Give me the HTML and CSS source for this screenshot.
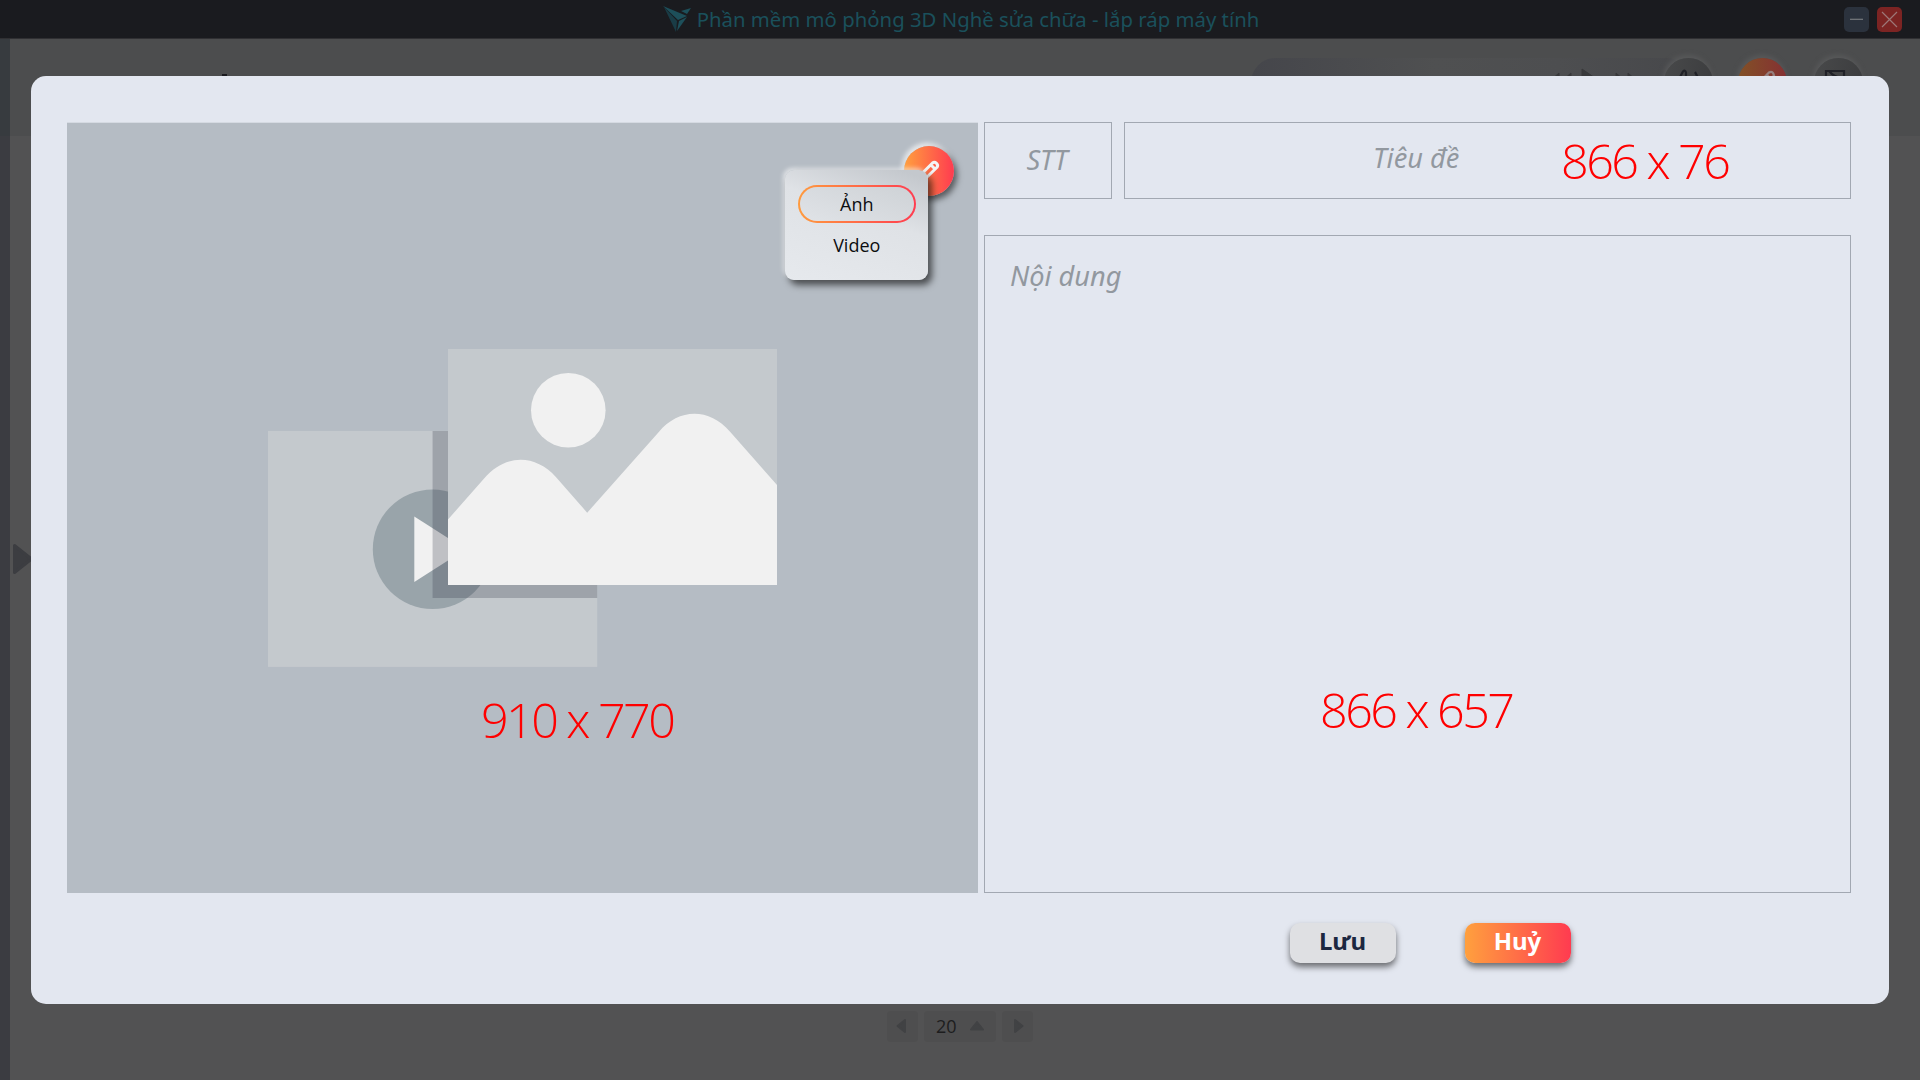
FILE: index.html
```html
<!DOCTYPE html>
<html lang="vi">
<head>
<meta charset="utf-8">
<title>Phần mềm mô phỏng 3D</title>
<link rel="stylesheet" href="styles.css">
</head>
<body>
<div class="app">
  <header class="titlebar">
    <div class="brand">
      <svg class="brand-logo" viewBox="0 0 28 26"><path d="M0 0 24 10 15 14z"/><path d="M18 5 28 2 24 8z"/><path d="M16 15 24 11 14 25z"/><path class="fold" d="M1 1 14 15 13 26z"/></svg>
      <span>Phần mềm mô phỏng 3D Nghề sửa chữa - lắp ráp máy tính</span>
    </div>
    <div class="window-buttons">
      <span class="win-btn"><svg viewBox="0 0 25 25"><path d="M6 12.3h13"/></svg></span>
      <span class="win-btn close"><svg viewBox="0 0 25 25"><path d="M5 5 20 20M20 5 5 20"/></svg></span>
    </div>
  </header>
  <div class="toolbar">
    <span class="heading-mark"></span>
    <div class="player"><svg viewBox="0 0 90 49"><path d="M0 23 9 15v16zM12 23 21 15v16zM32 11 51 24 32 38zM66 15 75 23 66 31zM78 15 87 23 78 31z"/></svg></div>
    <span class="tool volume"><svg viewBox="0 0 49 49"><path d="M11 21h4l4-7.500q2-2 3 1V35l-7-6h-4zM31 14q7 10 0 20"/></svg></span>
    <span class="tool edit"><svg viewBox="0 0 49 49"><path d="M18 28 31 14.500q4-2 5 3L21 33l-6 1zM13 19h4M29 17l4 4"/></svg></span>
    <span class="tool gallery"><svg viewBox="0 0 49 49"><path d="M12 32V13h18v6M15 13q5 6 12 7"/></svg></span>
  </div>
  <div class="workspace"></div>
  <aside class="rail"><i class="rail-top"></i><i class="rail-main"></i></aside>
  <svg class="rail-arrow" viewBox="0 0 20 30"><path d="M1.5 1.5 18.5 15 1.5 28.500z"/></svg>
  <nav class="pager">
    <span class="page-btn"><svg viewBox="0 0 31 31"><path d="M18 9 10.500 15 18 21z"/></svg></span>
    <span class="page-size"><span>20</span> <svg viewBox="0 0 16 12"><path d="M8 2 14 9.500H2z"/></svg></span>
    <span class="page-btn"><svg viewBox="0 0 31 31"><path d="M13 9 20.500 15 13 21z"/></svg></span>
  </nav>

  <section class="modal">
    <div class="editor">
      <div class="media">
        <svg class="media-art" viewBox="267.900 348.800 509.200 318">
          <rect x="267.900" y="430.700" width="329.200" height="236" fill="#c4c9cd"/>
          <circle cx="432.500" cy="549" r="59.800" fill="#99a4aa"/>
          <path d="M414.200 516.200 465.500 549 414.200 581.700z" fill="#f1f1f1"/>
          <path d="M432.500 430.700H597.100V597.800H432.500z" fill="#343844" fill-opacity=".26"/>
          <rect x="447.900" y="348.800" width="329.200" height="236" fill="#c4c9cd"/>
          <circle cx="568.200" cy="410" r="37.300" fill="#f1f1f1"/>
          <path d="M447.900 519.300 483.800 478.500C505 453.500 535 453.500 556 477L587.100 512.500 658.500 432C679 407.500 709 407.500 730 431.500L777.100 485V584.800H447.900z" fill="#f1f1f1"/>
        </svg>
        <span class="size">910 x 770</span>
        <span class="edit-badge"><svg viewBox="0 0 50 50"><path d="M15 30.500 28.500 17q2-1.500 4 .3t.5 4L19 35l-5.500 1z M27 19l4 4"/></svg></span>
        <div class="menu">
          <span class="menu-item active">Ảnh</span>
          <span class="menu-item">Video</span>
        </div>
      </div>
      <div class="fields">
        <div class="field-row">
          <div class="field number">STT</div>
          <div class="field title"><span class="title-label">Tiêu đề</span><span class="size">866 x 76</span></div>
        </div>
        <div class="field content"><span>Nội dung</span><span class="size">866 x 657</span></div>
      </div>
    </div>
    <div class="actions">
      <button class="btn save">Lưu</button>
      <button class="btn cancel">Huỷ</button>
    </div>
  </section>
</div>
</body>
</html>
```
FILE: styles.css
```css
* { box-sizing: border-box; }
body { margin: 0; font-family: "Noto Sans", sans-serif; }
svg { display: block; }
.app { position: relative; width: 1920px; height: 1080px; overflow: hidden; background: #525253; display: flex; flex-direction: column; }

.titlebar { height: 39px; flex: none; background: #1a1b1f; border-bottom: 1px solid #303033; display: grid; grid-template-columns: 1fr auto 1fr; align-items: center; padding: 0 18px 0 20px; }
.brand { grid-column: 2; display: flex; align-items: center; gap: 6px; color: #1a505b; font-size: 20.350px; line-height: 38px; white-space: nowrap; }
.brand-logo { width: 28px; height: 26px; fill: #1d4f5a; }
.brand-logo .fold { fill: #193c46; }
.window-buttons { grid-column: 3; justify-self: end; display: flex; gap: 8px; }
.win-btn { width: 25px; height: 25px; border-radius: 5px; background: #2b323d; }
.win-btn svg { stroke: #777a7e; stroke-width: 1.2; fill: none; }
.win-btn.close { background: #7c2423; }
.win-btn.close svg { stroke: #9c7777; }

.toolbar { height: 97px; flex: none; background: #4c4d4e; display: flex; align-items: flex-start; padding: 19px 57px 0 0; justify-content: flex-end; }
.heading-mark { width: 5px; height: 2px; margin: 16px 1024px 0 0; background: #1b1b20; }
.player { width: 440px; height: 49px; margin-right: -27px; border-radius: 25px; background: linear-gradient(90deg, #45464b, #4f5051 42%, #4d4e50 70%, #47484b); padding-left: 299px; }
.player svg { width: 90px; height: 49px; fill: #38393b; stroke: #38393b; stroke-linejoin: round; }
.tool { width: 49px; height: 49px; border-radius: 50%; background: linear-gradient(100deg, #48494a, #3b3c3e); box-shadow: -1px -3px 5px #58595a; margin-right: 25px; }
.tool svg { fill: none; stroke: #202127; stroke-width: 2.2; }
.tool.edit { background: linear-gradient(90deg, #825126, #853033); margin-right: 27px; }
.tool.edit svg { stroke: #957f7e; }
.tool.gallery { margin-right: 0; }
.workspace { flex: 1; }
.rail { position: absolute; left: 0; top: 39px; width: 10px; height: 1041px; display: flex; flex-direction: column; }
.rail-top { height: 97px; background: #373b3f; }
.rail-main { flex: 1; background: #3b3c41; }
.rail-arrow { position: absolute; left: 13px; top: 544px; width: 20px; height: 30px; fill: #3c3d41; stroke: #3c3d41; stroke-width: 3; stroke-linejoin: round; }

.pager { position: absolute; left: 887px; top: 1011px; display: flex; gap: 6px; }
.page-btn, .page-size { height: 31px; border-radius: 4px; background: #4e4e4f; }
.page-btn { width: 31px; }
.page-size { width: 72px; display: flex; align-items: center; justify-content: space-between; padding: 0 11px 1px 12px; font: 400 18px "Open Sans", sans-serif; color: #1d1d1e; }
.page-size svg { width: 16px; height: 12px; }
.pager svg { fill: #414244; stroke: #414244; stroke-width: 2; stroke-linejoin: round; }

.modal { position: absolute; left: 31px; top: 76px; width: 1858px; height: 928px; border-radius: 15px; background: #e3e7f0; padding: 46px 37px 0 36px; }
.editor { display: flex; gap: 6px; height: 771px; }
.media { position: relative; width: 911px; height: 771px; background: #b5bcc4; border-top: 1px solid #d5dae2; padding: 225.800px 0 0 200.900px; }
.media-art { width: 509.200px; height: 318px; }
.size { font-family: "Open Sans", sans-serif; font-weight: 300; font-size: 48.500px; letter-spacing: -2.550px; color: #f00; white-space: nowrap; line-height: 60px; }
.media > .size { display: block; margin: 22px 0 0 213px; }
.edit-badge { position: absolute; left: 837px; top: 23px; width: 50px; height: 50px; border-radius: 50%; background: linear-gradient(90deg, #ffa03e, #ff3b50); box-shadow: 3px 4px 6px #0008, -2px -3px 5px #fffb; }
.edit-badge svg { fill: none; stroke: #f4f4f4; stroke-width: 3; stroke-linejoin: round; }
.menu { position: absolute; left: 718px; top: 47px; width: 143px; height: 110px; border-radius: 9px; background: linear-gradient(200deg, #c4c8cd 6%, #dfe2e6 42%, #e6e9ed); box-shadow: 4px 5px 7px #0009, -2px -2px 4px #fff9; padding: 15px 12px 0 12.500px; font-family: "Open Sans", sans-serif; font-weight: 380; font-size: 18px; color: #0c0d10; text-align: center; }
.menu-item { display: block; height: 38px; line-height: 38px; margin-bottom: 3px; }
.menu-item.active { border: 2px solid transparent; border-radius: 19px; line-height: 34px; background: linear-gradient(200deg, #ced2d6, #e0e3e7) padding-box, linear-gradient(90deg, #ff9b3e, #ff3c50) border-box; }

.fields { display: flex; flex-direction: column; gap: 36px; }
.field-row { display: flex; gap: 12px; }
.field { border: 1px solid #a2a8b2; color: #92989f; font-style: italic; font-size: 27.200px; }
.field .size { font-style: normal; }
.number { width: 128px; height: 77px; line-height: 74px; text-align: center; padding-right: 2px; }
.title { width: 727px; height: 77px; display: flex; padding-left: 248px; }
.title-label { width: 188px; line-height: 70px; }
.title .size { line-height: 74px; }
.content { width: 867px; height: 658px; padding: 21px 25px; display: flex; flex-direction: column; line-height: 38px; }
.content .size { margin: 384px 0 0 310px; }

.actions { display: flex; gap: 69px; padding: 29.500px 0 0 1222.500px; }
.btn { width: 106px; height: 40px; border: 0; border-radius: 10px; padding: 0 0 3px; font: 700 24px/36px "Noto Sans", sans-serif; box-shadow: 0 4px 6px #0008; }
.save { background: #dfe0e3; color: #1c2740; }
.cancel { background: linear-gradient(90deg, #ffa03e, #ff3b50); color: #fff; }
```
